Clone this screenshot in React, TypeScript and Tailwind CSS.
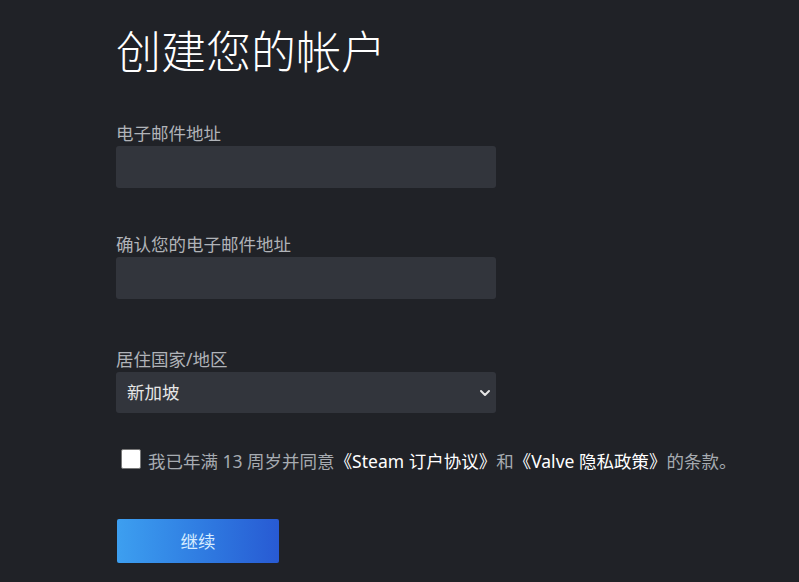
import React from "react";

const font = { fontFamily: '"Noto Sans", "Noto Sans CJK SC", sans-serif' };

export default function App() {
  return (
    <div
      className="w-[799px] h-[582px] bg-[#202227] overflow-hidden"
      style={font}
    >
      <div className="ml-[116px] flex flex-col pt-[24px]">
        <h1 className="text-[45px] leading-[56px] text-white font-light">
          创建您的帐户
        </h1>
        <label className="mt-[42px] text-[17.5px] leading-[22px] text-[#b0b3b8]">
          电子邮件地址
        </label>
        <div className="mt-[2px] w-[380px] h-[42px] rounded-[3px] bg-[#32353c]" />
        <label className="mt-[45px] text-[17.5px] leading-[22px] text-[#b0b3b8]">
          确认您的电子邮件地址
        </label>
        <div className="mt-[2px] w-[380px] h-[42px] rounded-[3px] bg-[#32353c]" />
        <label className="mt-[49px] text-[17.5px] leading-[22px] text-[#b0b3b8]">
          居住国家/地区
        </label>
        <div className="mt-[2px] w-[380px] h-[41px] rounded-[3px] bg-[#32353c] flex items-center justify-between pl-[11px] pr-[5px]">
          <span className="text-[17.5px] text-[#e6e6e6]">新加坡</span>
          <svg width="12" height="12" viewBox="0 0 12 12">
            <path d="M2 4 L6 8 L10 4" stroke="#e6e6e6" strokeWidth="2" fill="none" strokeLinecap="round" strokeLinejoin="round" />
          </svg>
        </div>
        <div className="mt-[32px] flex items-center">
          <div className="ml-[5px] w-[20px] h-[20px] rounded-[2px] bg-white border border-[#777]" />
          <p className="ml-[7px] text-[17.5px] leading-[24px] text-[#a6abb1] mt-[4px] whitespace-nowrap">
            我已年满 13 周岁并同意
            <span className="text-white">《Steam 订户协议》</span>和
            <span className="text-white">《Valve 隐私政策》</span>的条款。
          </p>
        </div>
        <button className="mt-[46px] ml-[1px] w-[162px] h-[44px] rounded-[2px] bg-gradient-to-r from-[#3d9ff0] to-[#285ad3] text-[17.5px] text-[#d6ecff]">
          继续
        </button>
      </div>
    </div>
  );
}
